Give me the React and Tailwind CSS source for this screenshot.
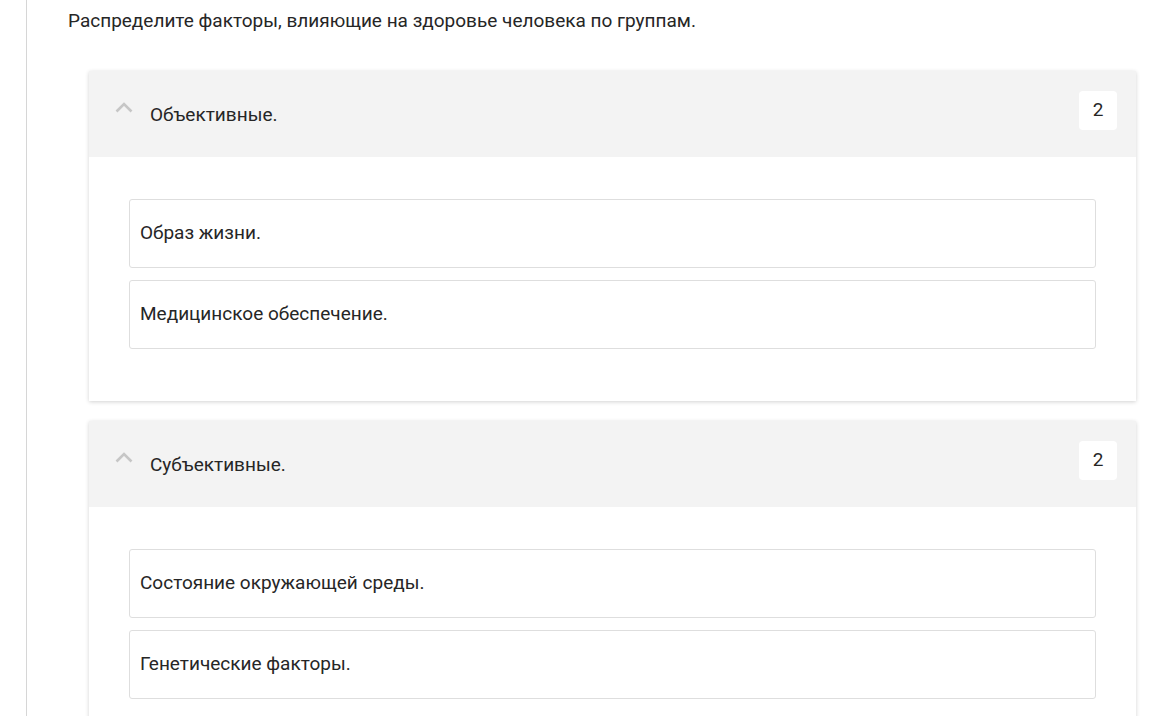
const groups = [
  { title: "Объективные.", items: ["Образ жизни.", "Медицинское обеспечение."] },
  { title: "Субъективные.", items: ["Состояние окружающей среды.", "Генетические факторы."] },
];

const Chevron = () => (
  <svg width="18" height="11" viewBox="0 0 18 11" fill="none" className="shrink-0">
    <path d="M1.5 9.5 L9 2 L16.5 9.5" stroke="#c6c6c6" strokeWidth="2.6" />
  </svg>
);

const Group = ({ title, items }) => (
  <div className="bg-white shadow-[0_1px_4px_rgba(0,0,0,0.18)]">
    <div className="h-[86px] bg-[#f3f3f3] flex items-start pl-[26px] pr-[19px] pt-[20px]">
      <div className="pt-[11px]">
        <Chevron />
      </div>
      <span className="ml-[17px] mt-[10px] text-[19px] text-[#262626]">{title}</span>
      <div className="ml-auto w-[38px] h-[39px] bg-white rounded-[4px] flex items-center justify-center text-[19px] text-[#262626]">
        2
      </div>
    </div>
    <div className="pt-[42px] pb-[52px] px-[40px] flex flex-col gap-[12px]">
      {items.map((t) => (
        <div
          key={t}
          className="h-[69px] border border-[#dedede] rounded-[3px] flex items-center px-[10px] text-[19px] text-[#262626]"
        >
          {t}
        </div>
      ))}
    </div>
  </div>
);

export default function App() {
  return (
    <div className="min-h-screen bg-white flex font-['Roboto',sans-serif]">
      <div className="w-[27px] shrink-0 border-r border-[#d6d6d6]" />
      <div className="flex-1 pl-[41px] pr-[39px]">
        <p className="pt-[9px] text-[19px] text-[#262626] leading-[24px]">
          Распределите факторы, влияющие на здоровье человека по группам.
        </p>
        <div className="mt-[38px] ml-[21px] flex flex-col gap-[20px]">
          {groups.map((g) => (
            <Group key={g.title} {...g} />
          ))}
        </div>
      </div>
    </div>
  );
}
